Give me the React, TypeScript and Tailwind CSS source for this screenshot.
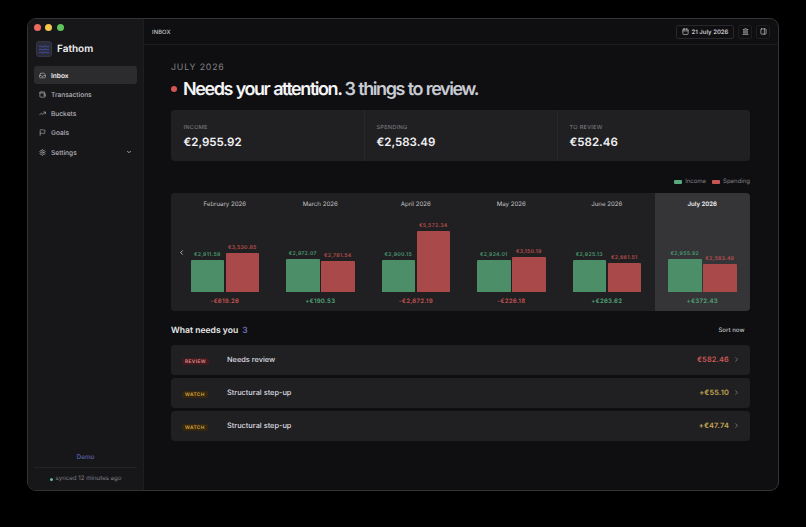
import React from 'react';
import { Calendar, ChevronDown, ChevronLeft, ChevronRight, Flag, Inbox, Landmark, PanelRight, Settings, TrendingUp, Wallet } from 'lucide-react';

const NAV = [
  { label: 'Inbox', icon: Inbox, active: true },
  { label: 'Transactions', icon: Wallet },
  { label: 'Buckets', icon: TrendingUp },
  { label: 'Goals', icon: Flag },
];

const STATS = [
  { label: 'INCOME', value: '€2,955.92' },
  { label: 'SPENDING', value: '€2,583.49' },
  { label: 'TO REVIEW', value: '€582.46' },
];

const MONTHS = [
  { name: 'February 2026', income: 2911.59, spending: 3530.85, net: '-€619.26' },
  { name: 'March 2026', income: 2972.07, spending: 2781.54, net: '+€190.53' },
  { name: 'April 2026', income: 2900.15, spending: 5572.34, net: '-€2,672.19' },
  { name: 'May 2026', income: 2924.01, spending: 3150.19, net: '-€226.18' },
  { name: 'June 2026', income: 2925.13, spending: 2661.51, net: '+€263.62' },
  { name: 'July 2026', income: 2955.92, spending: 2583.49, net: '+€372.43', current: true },
];

const ITEMS = [
  { tag: 'REVIEW', title: 'Needs review', amount: '€582.46' },
  { tag: 'WATCH', title: 'Structural step-up', amount: '+€55.10' },
  { tag: 'WATCH', title: 'Structural step-up', amount: '+€47.74' },
];

const MAX = 5572.34;

const money = (n: number) => '€' + n.toLocaleString('en-US', { minimumFractionDigits: 2 });

function Sidebar() {
  return (
    <aside className="w-[116px] shrink-0 flex flex-col bg-[#17171a] border-r border-[#1e1e21] px-[6px]">
      <div className="flex gap-[4.3px] pt-[5px]">
        <span className="w-[7px] h-[7px] rounded-full bg-[#ed6a5f]" />
        <span className="w-[7px] h-[7px] rounded-full bg-[#f5c64c]" />
        <span className="w-[7px] h-[7px] rounded-full bg-[#5fc35a]" />
      </div>

      <div className="flex items-center gap-[5px] mt-[10px] h-4 pl-[2px]">
        <div className="w-4 h-4 rounded-[3px] bg-[#2b2b3a] border border-[#343443] flex items-center justify-center">
          <svg width="10" height="9" viewBox="0 0 20 18" fill="none" stroke="#4653a6" strokeWidth="2">
            <path d="M0 3c3.3-3.4 6.7 3.4 10 0s6.7 3.4 10 0" />
            <path d="M0 9c3.3-3.4 6.7 3.4 10 0s6.7 3.4 10 0" />
            <path d="M0 15c3.3-3.4 6.7 3.4 10 0s6.7 3.4 10 0" />
          </svg>
        </div>
        <span className="text-[10px] leading-4 font-semibold text-[#f0f0f2]">Fathom</span>
      </div>

      <nav className="mt-[9px] flex flex-col gap-px">
        {NAV.map(({ label, icon: Icon, active }) => (
          <div
            key={label}
            className={`h-[18px] flex items-center gap-[5px] pl-[5px] rounded-[3px] text-[6.6px] leading-[8px] ${
              active ? 'bg-[#2c2c2f] text-[#f0f0f2] font-semibold' : 'text-[#b4b4ba] font-medium'
            }`}
          >
            <Icon size={7} strokeWidth={2.3} className="text-[#b0b0b6]" />
            <span className="pt-px">{label}</span>
          </div>
        ))}
        <div className="h-[18px] mt-px flex items-center gap-[5px] pl-[5px] pr-[5px] text-[6.6px] leading-[8px] font-medium text-[#b4b4ba]">
          <Settings size={7} strokeWidth={2.3} className="text-[#b0b0b6]" />
          <span className="flex-1 pt-px">Settings</span>
          <ChevronDown size={6} strokeWidth={3.5} />
        </div>
      </nav>

      <div className="mt-auto text-center text-[6.4px] leading-[8px] font-medium text-[#5b60a8]">Demo</div>
      <div className="mt-[6px] h-[23px] border-t border-[#232326] flex items-center justify-center gap-[3px] text-[6.1px] leading-[8px] text-[#808086]">
        <span className="w-[3px] h-[3px] rounded-full bg-[#62b98b]" />
        synced 12 minutes ago
      </div>
    </aside>
  );
}

function TopBar() {
  return (
    <header className="h-[26px] shrink-0 flex items-center border-b border-[#1b1b1e] pl-[8px] pr-[8px] text-[#c8c8cc]">
      <span className="text-[5.8px] leading-[8px] pt-[2px] font-medium tracking-[0.02em]">INBOX</span>
      <div className="ml-auto flex items-center gap-[4px]">
        <div className="h-[14px] w-[58px] flex items-center justify-center gap-[3px] rounded-[2px] border border-[#28282b] text-[6px] leading-[8px] font-semibold">
          <Calendar size={7} strokeWidth={2.3} />
          <span className="pt-[2px]">21 July 2026</span>
        </div>
        <div className="h-[14px] w-[14px] flex items-center justify-center rounded-[2px] border border-[#1e1e21]">
          <Landmark size={7} strokeWidth={2.3} />
        </div>
        <div className="h-[14px] w-[14px] flex items-center justify-center rounded-[2px] border border-[#1e1e21]">
          <PanelRight size={7} strokeWidth={2.3} />
        </div>
      </div>
    </header>
  );
}

function Bar({ value, kind }: { value: number; kind: 'income' | 'spending' }) {
  const income = kind === 'income';
  return (
    <div className="w-[33.5px] flex flex-col items-center">
      <span className={`text-[5.2px] leading-[6px] mb-[2px] font-semibold tracking-[0.05em] whitespace-nowrap ${income ? 'text-[#4a9a70]' : 'text-[#b94e4e]'}`}>
        {money(value)}
      </span>
      <div
        className={`w-full rounded-t-[1px] ${income ? 'bg-[#4c8e67]' : 'bg-[#a94949]'}`}
        style={{ height: (value / MAX) * 61.5 }}
      />
    </div>
  );
}

function CashflowChart() {
  return (
    <section className="h-[118px] flex bg-[#202022] rounded-[4px] overflow-hidden">
      {/* Previous months */}
      <div className="w-[6px] shrink-0 flex items-center">
        <ChevronLeft size={7} strokeWidth={3} className="shrink-0 ml-[7px] text-[#c8c8cc]" />
      </div>
      {MONTHS.map((m) => (
        <div key={m.name} className={`flex-1 flex flex-col items-center pt-[8px] ${m.current ? 'bg-[#353538]' : ''}`}>
          <span className={`text-[6.1px] leading-[8px] ${m.current ? 'font-semibold text-[#f0f0f2]' : 'text-[#c0c0c5]'}`}>{m.name}</span>
          <div className="h-[83px] flex items-end gap-[1.5px]">
            <Bar value={m.income} kind="income" />
            <Bar value={m.spending} kind="spending" />
          </div>
          <span className={`mt-[6px] text-[6.1px] leading-[8px] font-semibold tracking-[0.04em] ${m.net[0] === '-' ? 'text-[#c25252]' : 'text-[#4fa377]'}`}>
            {m.net}
          </span>
        </div>
      ))}
    </section>
  );
}

export default function App() {
  return (
    <div className="w-[806px] h-[527px] bg-black pt-[18px] pl-[27px] font-['Inter',sans-serif] [text-rendering:geometricPrecision]">
      <div className="w-[752px] h-[473px] flex rounded-[9px] border border-[#333335] bg-[#0f0f11] overflow-hidden">
        <Sidebar />
        <div className="flex-1 flex flex-col min-w-0">
          <TopBar />
          <main className="pl-[27px] w-[606px] pt-[17px] flex flex-col">
            <div className="text-[8.8px] leading-[12px] tracking-[0.09em] text-[#808086]">JULY 2026</div>
            <h1 className="mt-[4px] flex items-center text-[18px] leading-[24px] font-semibold tracking-[-0.08em] [word-spacing:0.04em] text-[#f5f5f7] whitespace-nowrap">
              <span className="w-[6px] h-[6px] mb-[2px] rounded-full bg-[#d35454] mr-[6px]" />
              Needs your attention.
              <span className="ml-[3px] text-[#c9cbd3]">3 things to review.</span>
            </h1>

            <section className="mt-[8px] h-[51px] grid grid-cols-3 bg-[#202022] rounded-[4px]">
              {STATS.map((s, i) => (
                <div key={s.label} className={`pt-[14px] ${i > 0 ? 'pl-[11.5px] border-l border-[#28282b]' : 'pl-[12.5px]'}`}>
                  <div className="text-[5.6px] leading-[8px] tracking-[0.05em] text-[#828288]">{s.label}</div>
                  <div className="mt-[3px] text-[11.5px] leading-[15px] font-semibold text-[#f0f0f2]">{s.value}</div>
                </div>
              ))}
            </section>

            <div className="mt-[17px] h-[8px] mb-[7px] flex items-center justify-end gap-[6px] text-[6px] leading-[8px] text-[#808086]">
              <span className="flex items-center gap-[3px]">
                <i className="w-[8px] h-[4px] mb-px rounded-[1px] bg-[#58aa7c]" />
                Income
              </span>
              <span className="flex items-center gap-[3px]">
                <i className="w-[8px] h-[4px] mb-px rounded-[1px] bg-[#c95454]" />
                Spending
              </span>
            </div>

            <CashflowChart />

            <div className="mt-[14px] h-[12px] flex items-center pr-[5.5px] leading-[12px]">
              <h2 className="text-[8.6px] font-semibold text-[#e8e8ea]">What needs you</h2>
              <span className="ml-[4px] text-[8.6px] font-medium text-[#7479c4]">3</span>
              <span className="ml-auto text-[6.1px] font-medium text-[#c0c0c4]">Sort now</span>
            </div>

            <div className="mt-[8px] flex flex-col gap-[3px]">
              {ITEMS.map((it, i) => {
                const review = it.tag === 'REVIEW';
                return (
                  <div key={i} className="h-[30px] flex items-center bg-[#202022] rounded-[4px] pl-[11px] pr-[10px] leading-[10px]">
                    <div className="w-[45px] pt-[3px] flex">
                      <span
                        className={`h-[7px] px-[3px] flex items-center rounded-[2px] text-[4.8px] font-semibold tracking-[0.08em] ${
                          review ? 'bg-[#411a1d] text-[#e08d8d]' : 'bg-[#35270f] text-[#d9a944]'
                        }`}
                      >
                        {it.tag}
                      </span>
                    </div>
                    <span className="text-[7.4px] font-medium text-[#dcdce0]">{it.title}</span>
                    <span className={`ml-auto text-[7.4px] tracking-[0.02em] font-semibold ${review ? 'text-[#cf5858]' : 'text-[#c5a753]'}`}>{it.amount}</span>
                    <ChevronRight size={7} strokeWidth={2.5} className="ml-[4px] mb-px text-[#8a8a90]" />
                  </div>
                );
              })}
            </div>
          </main>
        </div>
      </div>
    </div>
  );
}
